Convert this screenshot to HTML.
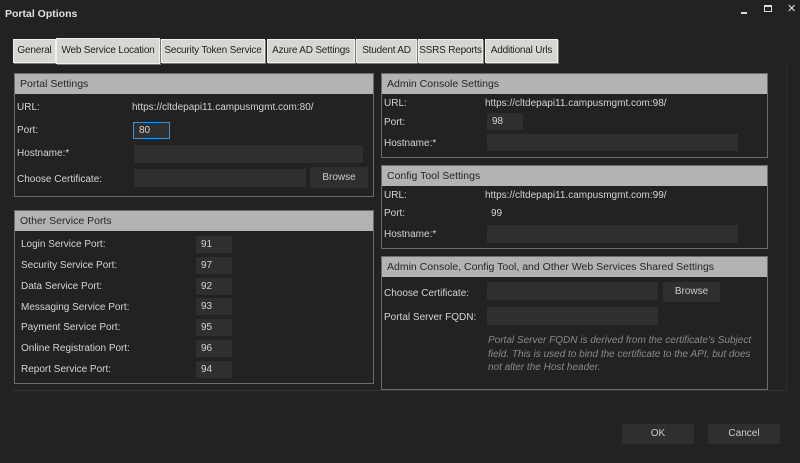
<!DOCTYPE html>
<html><head><style>
*{margin:0;padding:0;box-sizing:border-box}
body{width:800px;height:463px;background:#212221;font-family:"Liberation Sans",sans-serif;font-size:10px;color:#d4d4d4;position:relative;overflow:hidden}
.a{position:absolute;white-space:nowrap}
.tab{position:absolute;top:39px;height:24px;background:#d8d6d3;border:1px solid #f0f0f0;color:#222;font-size:10px;line-height:22px;text-align:center;box-shadow:1px 1px 0 #777;white-space:nowrap;overflow:hidden;letter-spacing:-0.2px}
.panel{position:absolute;border:1px solid #6c6c6c}
.hd{position:absolute;left:0;right:0;top:0;height:20px;background:#b4b2b4;color:#262626;font-size:10.5px;line-height:20px;padding-left:5px}
.in{position:absolute;background:#2f2f2f}
.btn{position:absolute;background:#2f2f2f;text-align:center;color:#ccc}
</style></head><body>
<div class="a" style="left:5px;top:8px;font-weight:bold;font-size:10.5px;color:#e0e0e0">Portal Options</div>
<div class="a" style="left:741px;top:12px;width:6px;height:2px;background:#ddd"></div>
<div class="a" style="left:764px;top:5px;width:8px;height:7px;border:1px solid #ddd;border-top-width:2px"></div>
<div class="a" style="left:787px;top:2px;font-size:11px;color:#ddd">✕</div>

<div class="a" style="left:12px;top:63px;width:775px;height:328px;border-right:1px solid #2c2d2c;border-bottom:1px solid #333"></div>

<div class="tab" style="left:13px;width:43px">General</div>
<div class="tab" style="left:56px;width:104px;top:38px;height:26px;line-height:24px">Web Service Location</div>
<div class="tab" style="left:161px;width:104px">Security Token Service</div>
<div class="tab" style="left:267px;width:88px">Azure AD Settings</div>
<div class="tab" style="left:356px;width:61px">Student AD</div>
<div class="tab" style="left:418px;width:65px">SSRS Reports</div>
<div class="tab" style="left:485px;width:73px">Additional Urls</div>

<div class="panel" style="left:14px;top:73px;width:360px;height:124px"><div class="hd">Portal Settings</div></div>
<div class="a" style="left:17px;top:102px">URL:</div>
<div class="a" style="left:132px;top:102px">https://cltdepapi11.campusmgmt.com:80/</div>
<div class="a" style="left:17px;top:125px">Port:</div>
<div class="in" style="left:133px;top:122px;width:37px;height:17px;border:1px solid #3e8ed0;padding-left:5px;line-height:15px">80</div>
<div class="a" style="left:17px;top:148px">Hostname:*</div>
<div class="in" style="left:134px;top:145px;width:229px;height:18px"></div>
<div class="a" style="left:17px;top:174px">Choose Certificate:</div>
<div class="in" style="left:134px;top:169px;width:172px;height:18px"></div>
<div class="btn" style="left:310px;top:167px;width:58px;height:21px;line-height:21px">Browse</div>

<div class="panel" style="left:14px;top:210px;width:360px;height:174px"><div class="hd">Other Service Ports</div></div>
<div class="a" style="left:21px;top:239px">Login Service Port:</div><div class="in" style="left:196px;top:236px;width:36px;height:17px;padding-left:5px;line-height:17px">91</div>
<div class="a" style="left:21px;top:260px">Security Service Port:</div><div class="in" style="left:196px;top:257px;width:36px;height:17px;padding-left:5px;line-height:17px">97</div>
<div class="a" style="left:21px;top:281px">Data Service Port:</div><div class="in" style="left:196px;top:278px;width:36px;height:17px;padding-left:5px;line-height:17px">92</div>
<div class="a" style="left:21px;top:302px">Messaging Service Port:</div><div class="in" style="left:196px;top:298px;width:36px;height:17px;padding-left:5px;line-height:17px">93</div>
<div class="a" style="left:21px;top:322px">Payment Service Port:</div><div class="in" style="left:196px;top:319px;width:36px;height:17px;padding-left:5px;line-height:17px">95</div>
<div class="a" style="left:21px;top:343px">Online Registration Port:</div><div class="in" style="left:196px;top:340px;width:36px;height:17px;padding-left:5px;line-height:17px">96</div>
<div class="a" style="left:21px;top:364px">Report Service Port:</div><div class="in" style="left:196px;top:361px;width:36px;height:17px;padding-left:5px;line-height:17px">94</div>

<div class="panel" style="left:381px;top:73px;width:387px;height:85px"><div class="hd">Admin Console Settings</div></div>
<div class="a" style="left:384px;top:98px">URL:</div>
<div class="a" style="left:485px;top:98px">https://cltdepapi11.campusmgmt.com:98/</div>
<div class="a" style="left:384px;top:117px">Port:</div>
<div class="in" style="left:487px;top:113px;width:36px;height:17px;padding-left:5px;line-height:17px">98</div>
<div class="a" style="left:384px;top:138px">Hostname:*</div>
<div class="in" style="left:487px;top:134px;width:251px;height:17px"></div>

<div class="panel" style="left:381px;top:165px;width:387px;height:84px"><div class="hd">Config Tool Settings</div></div>
<div class="a" style="left:384px;top:190px">URL:</div>
<div class="a" style="left:485px;top:190px">https://cltdepapi11.campusmgmt.com:99/</div>
<div class="a" style="left:384px;top:208px">Port:</div>
<div class="a" style="left:491px;top:208px">99</div>
<div class="a" style="left:384px;top:229px">Hostname:*</div>
<div class="in" style="left:487px;top:225px;width:251px;height:18px"></div>

<div class="panel" style="left:381px;top:256px;width:387px;height:134px"><div class="hd">Admin Console, Config Tool, and Other Web Services Shared Settings</div></div>
<div class="a" style="left:384px;top:288px">Choose Certificate:</div>
<div class="in" style="left:487px;top:282px;width:171px;height:18px"></div>
<div class="btn" style="left:663px;top:282px;width:57px;height:20px;line-height:20px">Browse</div>
<div class="a" style="left:384px;top:312px">Portal Server FQDN:</div>
<div class="in" style="left:487px;top:307px;width:171px;height:18px"></div>
<div class="a" style="left:488px;top:334px;font-style:italic;color:#8a8a8a;line-height:13.5px">Portal Server FQDN is derived from the certificate's Subject<br>field. This is used to bind the certificate to the API, but does<br>not alter the Host header.</div>

<div class="btn" style="left:622px;top:424px;width:72px;height:20px;line-height:20px">OK</div>
<div class="btn" style="left:708px;top:424px;width:72px;height:20px;line-height:20px">Cancel</div>
</body></html>
